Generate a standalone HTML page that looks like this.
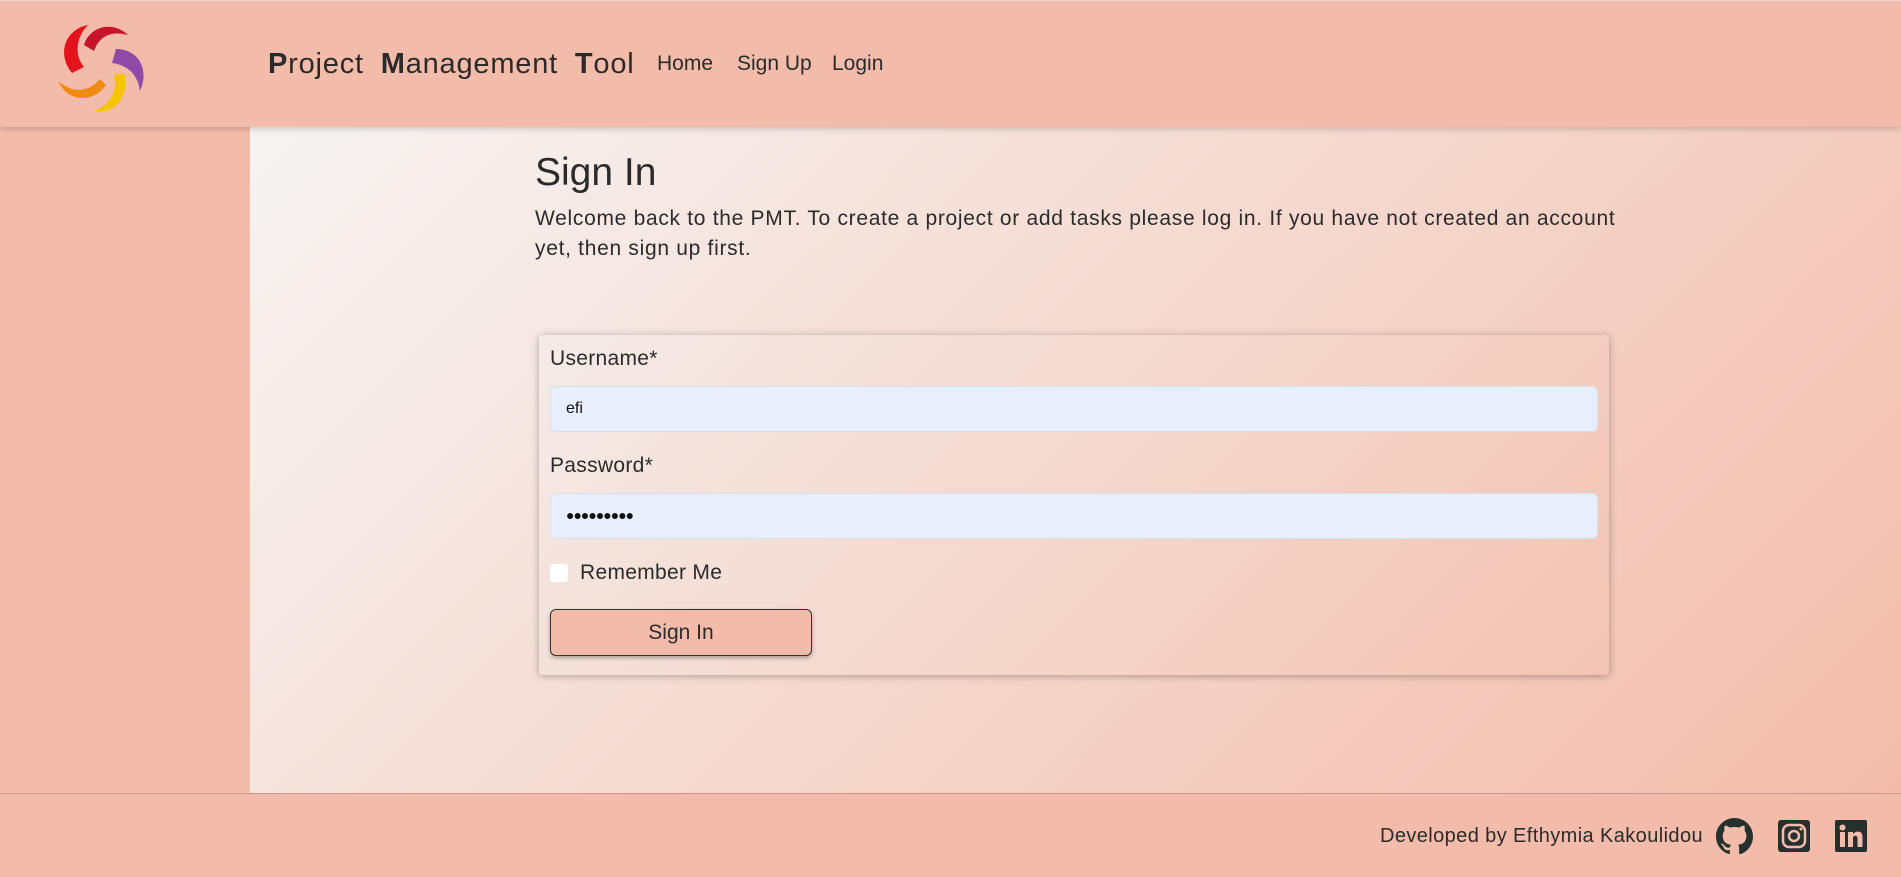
<!DOCTYPE html>
<html><head><style>
*{box-sizing:border-box;margin:0;padding:0}
body{width:1901px;height:877px;overflow:hidden;background:#f3bcaa;font-family:"Liberation Sans",sans-serif;color:#2b2b2b;position:relative}
header{position:absolute;left:0;top:0;width:1901px;height:127px;background:#f3bcaa;box-shadow:0 2px 6px rgba(0,0,0,.18);z-index:2;border-top:1px solid #e8d8d2}
.logo{position:absolute;left:56px;top:20px}
.title{position:absolute;left:268px;top:47px;font-size:29px;font-weight:bold;letter-spacing:.8px;word-spacing:8px}
.title span{font-weight:normal}
.nav{position:absolute;top:51px;font-size:21px}
main{position:absolute;left:250px;top:127px;width:1651px;height:666px;background:linear-gradient(135deg,#f6f4f3 0%,#f5d8ce 50%,#f3bcaa 100%)}
h1{position:absolute;left:285px;top:24px;font-size:39px;font-weight:normal}
p.w{position:absolute;left:285px;top:77px;width:1115px;font-size:21px;letter-spacing:.7px;line-height:30px}
.card{position:absolute;left:289px;top:208px;width:1070px;height:340px;border-radius:4px;box-shadow:0 1px 8px rgba(0,0,0,.3);background:linear-gradient(135deg,#f5ebe7,#f3c4b3)}
.lbl{position:absolute;left:11px;font-size:21px;letter-spacing:.3px}
.inp{position:absolute;left:11px;width:1048px;height:46px;background:#e7effd;border:1px solid #d8e0ee;border-radius:6px;font-size:16px;padding:13px 15px;color:#111}
.cb{position:absolute;left:11px;top:229px;width:18px;height:18px;background:#fff;border-radius:3px}
.btn{position:absolute;left:11px;top:274px;width:262px;height:47px;background:#f3bcaa;border:1px solid #333;border-radius:6px;box-shadow:0 2px 4px rgba(0,0,0,.3);font-size:21px;text-align:center;line-height:45px}
footer{position:absolute;left:0;top:793px;width:1901px;height:84px;border-top:1px solid #c99a8c;background:#f3bcaa}
.ft{position:absolute;right:198px;top:31px;font-size:20px;letter-spacing:.4px}
</style></head><body>
<header>
<svg class="logo" width="92" height="92" viewBox="0 0 92 92">
<path d="M16 52 C0 32 10 8 32 4 C20 16 18 34 28 46 Z" fill="#e3121c"/>
<path d="M28 24 C34 4 58 0 72 14 C56 10 44 14 38 30 Z" fill="#c8142a"/>
<path d="M60 28 C82 28 94 48 84 70 C82 54 72 44 56 42 Z" fill="#8e4aa6"/>
<path d="M68 52 C74 74 60 94 38 90 C54 84 62 70 58 54 Z" fill="#f5c400"/>
<path d="M50 64 C38 82 12 82 2 60 C16 72 32 72 44 58 Z" fill="#f08a10"/>
</svg>
<div class="title">P<span>roject</span> M<span>anagement</span> T<span>ool</span></div>
<div class="nav" style="left:657px">Home</div>
<div class="nav" style="left:737px">Sign Up</div>
<div class="nav" style="left:832px">Login</div>
</header>
<main>
<h1>Sign In</h1>
<p class="w">Welcome back to the PMT. To create a project or add tasks please log in. If you have not created an account yet, then sign up first.</p>
<div class="card">
<div class="lbl" style="top:12px">Username*</div>
<div class="inp" style="top:51px">efi</div>
<div class="lbl" style="top:119px">Password*</div>
<div class="inp" style="top:158px;font-size:14px;letter-spacing:-1px">●●●●●●●●●</div>
<div class="cb"></div>
<div class="lbl" style="left:41px;top:226px">Remember Me</div>
<div class="btn">Sign In</div>
</div>
</main>
<footer>
<div class="ft">Developed by Efthymia Kakoulidou</div>
<svg style="position:absolute;left:1716px;top:24px" width="37" height="37" viewBox="0 0 16 16"><path fill="#26312e" d="M8 0C3.58 0 0 3.58 0 8c0 3.54 2.290 6.530 5.470 7.590.4.07.55-.17.55-.38v-1.34c-2.23.48-2.7-1.07-2.7-1.07-.36-.92-.89-1.170-.89-1.170-.73-.5.06-.49.06-.49.8.06 1.23.83 1.23.83.71 1.22 1.87.87 2.33.66.07-.52.28-.87.51-1.07-1.78-.2-3.640-.89-3.640-3.95 0-.87.31-1.59.82-2.15-.08-.2-.36-1.02.08-2.12 0 0 .67-.21 2.2.82.64-.18 1.32-.27 2-.27.68 0 1.36.09 2 .27 1.53-1.04 2.2-.82 2.2-.82.44 1.1.16 1.92.08 2.12.51.56.82 1.27.82 2.15 0 3.07-1.87 3.75-3.65 3.95.29.25.54.73.54 1.48v2.2c0 .21.15.46.55.38A8.01 8.01 0 0016 8c0-4.42-3.58-8-8-8z"/></svg>
<svg style="position:absolute;left:1778px;top:26px" width="32" height="32" viewBox="0 0 32 32"><rect width="32" height="32" rx="3" fill="#26312e"/><rect x="5" y="5" width="22" height="22" rx="6" fill="none" stroke="#f3bcaa" stroke-width="2.5"/><circle cx="16" cy="16" r="5" fill="none" stroke="#f3bcaa" stroke-width="2.5"/><circle cx="23" cy="9" r="1.5" fill="#f3bcaa"/></svg>
<svg style="position:absolute;left:1835px;top:26px" width="32" height="32" viewBox="0 0 32 32"><rect width="32" height="32" rx="2" fill="#26312e"/><rect x="5" y="12" width="5" height="15" fill="#f3bcaa"/><circle cx="7.5" cy="7.5" r="3" fill="#f3bcaa"/><path d="M13 12h5v2.2c1-1.6 2.6-2.6 5-2.6 3.4 0 4.5 2.2 4.5 5.6V27h-5v-8.5c0-1.8-.6-2.8-2.2-2.8-1.8 0-2.3 1.3-2.3 3V27h-5z" fill="#f3bcaa"/></svg>
</footer>
</body></html>
